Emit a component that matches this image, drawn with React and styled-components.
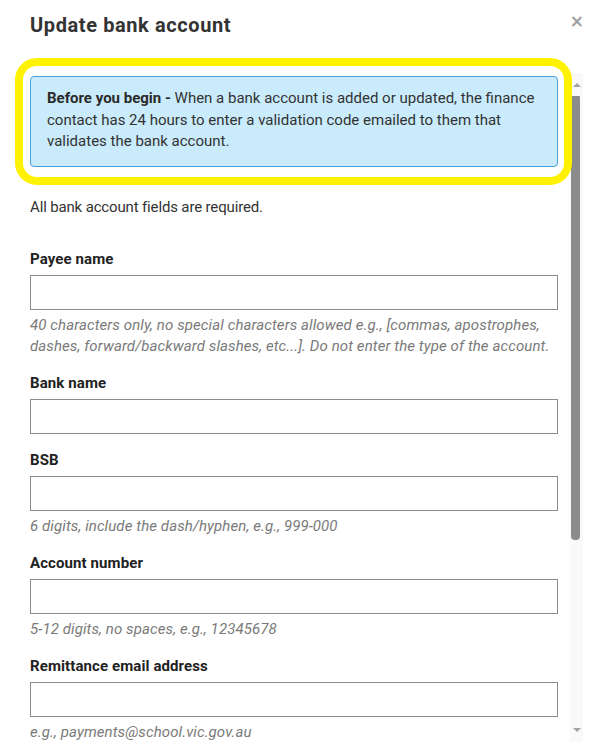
import React from 'react';
import styled, { createGlobalStyle } from 'styled-components';

const GlobalStyle = createGlobalStyle`
  html, body {
    margin: 0;
    padding: 0;
    background: #fff;
    overflow: hidden;
  }
  body {
    font-family: Roboto, "Noto Sans", sans-serif;
    color: #333;
  }
`;

const Modal = styled.div`
  width: 595px;
  height: 754px;
  padding-left: 30px;
  box-sizing: border-box;
  overflow: hidden;
`;

const Header = styled.div`
  height: 73px;
  display: flex;
  justify-content: space-between;
  align-items: flex-start;
  padding-right: 11px;
`;

const Title = styled.h2`
  margin: 13px 0 0;
  font-size: 20px;
  line-height: 24px;
  font-weight: 700;
  color: #333;
  letter-spacing: 0.6px;
`;

const Close = styled.button`
  margin-top: 11px;
  padding: 0;
  border: 0;
  background: none;
  font-family: "DejaVu Sans", sans-serif;
  font-size: 17px;
  font-weight: 700;
  color: #a0a0a0;
  line-height: 20px;
  cursor: pointer;
`;

const Body = styled.div`
  display: flex;
  align-items: flex-start;
`;

const Content = styled.div`
  width: 528px;
  padding-top: 3px;
`;

const CalloutWrap = styled.div`
  position: relative;
`;

const Callout = styled.div`
  background: #c9ebfb;
  border: 1px solid #4b9fd6;
  border-radius: 4px;
  padding: 11px 16px 13px;
  font-size: 15px;
  line-height: 21.5px;
  color: #333;

  strong {
    font-weight: 700;
    color: #2a2a2a;
  }
`;

const Highlight = styled.div`
  position: absolute;
  top: -18px;
  left: -15px;
  right: -14px;
  bottom: -18px;
  border: 8px solid #fff200;
  border-radius: 22px;
  pointer-events: none;
`;

const Intro = styled.p`
  margin: 30px 0 31px;
  font-size: 15px;
  line-height: 21px;
  letter-spacing: -0.15px;
  color: #333;
`;

const Field = styled.div`
  margin-bottom: 16px;
`;

const Label = styled.label`
  display: block;
  font-size: 15px;
  line-height: 21px;
  font-weight: 700;
  letter-spacing: 0.1px;
  color: #222;
  margin-bottom: 5px;
`;

const Input = styled.input`
  display: block;
  width: 100%;
  height: 35px;
  box-sizing: border-box;
  border: 1px solid #8c8c8c;
  border-radius: 0;
  padding: 0 10px;
  font-family: inherit;
  font-size: 15px;
  background: #fff;
  outline: none;
`;

const Hint = styled.p`
  margin: 5px 0 0;
  font-size: 15px;
  line-height: 21px;
  font-style: italic;
  letter-spacing: 0.1px;
  color: #7a7a7a;
`;

const Track = styled.div`
  margin-left: 12px;
  width: 13px;
  height: 669px;
  background: #f9f9f9;
  display: flex;
  flex-direction: column;
  align-items: center;
`;

const Arrow = styled.div`
  width: 0;
  height: 0;
  border-left: 4px solid transparent;
  border-right: 4px solid transparent;
  ${({ $down }) =>
    $down
      ? 'border-top: 4px solid #a3a3a3; margin-top: auto; margin-bottom: 10px;'
      : 'border-bottom: 4px solid #a3a3a3; margin-top: 10px;'}
`;

const Thumb = styled.div`
  margin-top: 9px;
  margin-right: 2px;
  width: 9px;
  height: 444px;
  background: #8c8c8c;
  border-radius: 1px 1px 4px 4px;
`;

const fields = [
  {
    label: 'Payee name',
    hint: '40 characters only, no special characters allowed e.g., [commas, apostrophes, dashes, forward/backward slashes, etc...]. Do not enter the type of the account.',
  },
  { label: 'Bank name' },
  { label: 'BSB', hint: '6 digits, include the dash/hyphen, e.g., 999-000' },
  { label: 'Account number', hint: '5-12 digits, no spaces, e.g., 12345678' },
  { label: 'Remittance email address', hint: 'e.g., payments@school.vic.gov.au' },
];

export default function App() {
  return (
    <>
      <GlobalStyle />
      <Modal>
        <Header>
          <Title>Update bank account</Title>
          <Close aria-label="Close">×</Close>
        </Header>
        <Body>
          <Content>
            <CalloutWrap>
              <Callout>
                <strong>Before you begin - </strong>
                When a bank account is added or updated, the finance contact has 24 hours to enter a
                validation code emailed to them that validates the bank account.
              </Callout>
              <Highlight />
            </CalloutWrap>
            <Intro>All bank account fields are required.</Intro>
            {fields.map((f) => (
              <Field key={f.label}>
                <Label>{f.label}</Label>
                <Input type="text" />
                {f.hint && <Hint>{f.hint}</Hint>}
              </Field>
            ))}
          </Content>
          <Track>
            <Arrow />
            <Thumb />
            <Arrow $down />
          </Track>
        </Body>
      </Modal>
    </>
  );
}
